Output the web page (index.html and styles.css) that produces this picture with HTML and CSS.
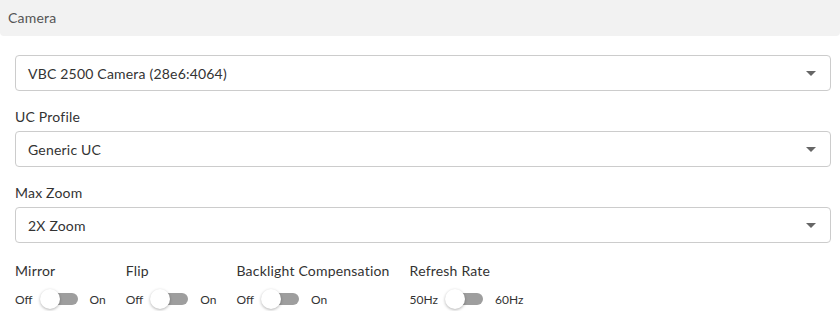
FILE: index.html
```html
<!DOCTYPE html>
<html lang="en">
<head>
    <meta charset="UTF-8">
    <meta name="viewport" content="width=device-width, initial-scale=1.0">
    <title>Camera Settings</title>
    <link rel="stylesheet" href="styles.css">
</head>
<body>
    <!-- Section Header -->
    <header class="panel-header">Camera</header>

    <section class="panel-body">
        <!-- Camera Device -->
        <div class="field">
            <div class="select">
                <span>VBC 2500 Camera (28e6:4064)</span>
                <span class="caret"></span>
            </div>
        </div>

        <div class="field">
            <label class="field-label">UC Profile</label>
            <div class="select">
                <span>Generic UC</span>
                <span class="caret"></span>
            </div>
        </div>

        <div class="field">
            <label class="field-label">Max Zoom</label>
            <div class="select">
                <span>2X Zoom</span>
                <span class="caret"></span>
            </div>
        </div>

        <!-- Toggles -->
        <div class="toggle-row">
            <div class="toggle-group">
                <label class="field-label">Mirror</label>
                <div class="toggle">
                    <span class="toggle-text">Off</span>
                    <span class="switch"><span class="knob"></span></span>
                    <span class="toggle-text">On</span>
                </div>
            </div>
            <div class="toggle-group">
                <label class="field-label">Flip</label>
                <div class="toggle">
                    <span class="toggle-text">Off</span>
                    <span class="switch"><span class="knob"></span></span>
                    <span class="toggle-text">On</span>
                </div>
            </div>
            <div class="toggle-group">
                <label class="field-label">Backlight Compensation</label>
                <div class="toggle">
                    <span class="toggle-text">Off</span>
                    <span class="switch"><span class="knob"></span></span>
                    <span class="toggle-text">On</span>
                </div>
            </div>
            <div class="toggle-group">
                <label class="field-label">Refresh Rate</label>
                <div class="toggle">
                    <span class="toggle-text">50Hz</span>
                    <span class="switch"><span class="knob"></span></span>
                    <span class="toggle-text">60Hz</span>
                </div>
            </div>
        </div>
    </section>
</body>
</html>
```

FILE: styles.css
```css
/* General Reset */
* {
    margin: 0;
    padding: 0;
    box-sizing: border-box;
    font-family: Lato, "Liberation Sans", sans-serif;
}

body {
    background-color: #ffffff;
    color: #333;
    font-size: 14px;
    letter-spacing: 0.2px;
}

/* Header */
.panel-header {
    height: 36px;
    line-height: 36px;
    padding: 0 8px;
    background-color: #f2f2f2;
    color: #555;
    font-size: 14px;
    border-radius: 0 0 4px 4px;
}

.panel-body {
    padding: 19px 9px 0 15px;
}

/* Fields */
.field {
    margin-bottom: 16px;
}

.field-label {
    display: block;
    height: 20px;
    line-height: 20px;
    margin-bottom: 4px;
    font-size: 14px;
    color: #333;
}

.select {
    display: flex;
    align-items: center;
    justify-content: space-between;
    height: 36px;
    padding: 0 14px 0 12px;
    border: 1px solid #ccc;
    border-radius: 4px;
    color: #333;
}

.caret {
    width: 0;
    height: 0;
    border-left: 5px solid transparent;
    border-right: 5px solid transparent;
    border-top: 5px solid #666;
}

/* Toggle Row */
.toggle-row {
    display: flex;
    gap: 20px;
    padding-top: 2px;
}

.toggle {
    display: flex;
    align-items: center;
    height: 24px;
    margin-top: 6px;
}

.toggle-text {
    font-size: 12px;
    color: #333;
    letter-spacing: 0;
}

.switch {
    position: relative;
    width: 34px;
    height: 12px;
    margin: 0 12px 0 11px;
    background-color: #9e9e9e;
    border-radius: 6px;
}

.knob {
    position: absolute;
    left: -4px;
    top: -4px;
    width: 20px;
    height: 20px;
    background-color: #fff;
    border-radius: 50%;
    box-shadow: 0 1px 3px rgba(0, 0, 0, 0.3);
}
```
